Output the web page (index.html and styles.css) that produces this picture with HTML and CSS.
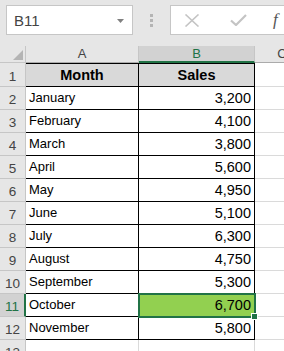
FILE: index.html
```html
<!DOCTYPE html>
<html lang="en">
  <head>
    <meta charset="UTF-8" />
    <meta name="viewport" content="width=device-width, initial-scale=1.0" />
    <title>Monthly Sales</title>
    <link rel="stylesheet" href="styles.css">
  </head>
  <body>
    <div class="toolbar">
      <div class="namebox">
        <span>B11</span>
        <svg class="drop" width="7" height="4" viewBox="0 0 7 4"><path d="M0 0h7L3.5 4z" fill="#808080"/></svg>
      </div>
      <div class="dots"><i></i><i></i><i></i></div>
      <div class="formula">
        <svg width="16" height="13" viewBox="0 0 16 13"><path d="M1.5 0.5l13 12M14.5 0.5l-13 12" stroke="#c4c4c4" stroke-width="1.6" fill="none"/></svg>
        <svg width="17" height="12" viewBox="0 0 17 12"><path d="M1 6.5l5 4.5L16 1" stroke="#c4c4c4" stroke-width="2.2" fill="none"/></svg>
        <span class="fx">f</span>
      </div>
    </div>

    <div class="sheet">
      <div class="corner"><span></span></div>
      <div class="colhead">A</div>
      <div class="colhead sel">B</div>
      <div class="colhead last">C</div>

      <div class="rowhead">1</div>
      <div class="cell th">Month</div>
      <div class="cell th">Sales</div>
      <div class="cell empty top"></div>

      <div class="rowhead">2</div>
      <div class="cell">January</div>
      <div class="cell num">3,200</div>
      <div class="cell empty"></div>

      <div class="rowhead">3</div>
      <div class="cell">February</div>
      <div class="cell num">4,100</div>
      <div class="cell empty"></div>

      <div class="rowhead">4</div>
      <div class="cell">March</div>
      <div class="cell num">3,800</div>
      <div class="cell empty"></div>

      <div class="rowhead">5</div>
      <div class="cell">April</div>
      <div class="cell num">5,600</div>
      <div class="cell empty"></div>

      <div class="rowhead">6</div>
      <div class="cell">May</div>
      <div class="cell num">4,950</div>
      <div class="cell empty"></div>

      <div class="rowhead">7</div>
      <div class="cell">June</div>
      <div class="cell num">5,100</div>
      <div class="cell empty"></div>

      <div class="rowhead">8</div>
      <div class="cell">July</div>
      <div class="cell num">6,300</div>
      <div class="cell empty"></div>

      <div class="rowhead">9</div>
      <div class="cell">August</div>
      <div class="cell num">4,750</div>
      <div class="cell empty"></div>

      <div class="rowhead">10</div>
      <div class="cell">September</div>
      <div class="cell num">5,300</div>
      <div class="cell empty"></div>

      <div class="rowhead sel">11</div>
      <div class="cell">October</div>
      <div class="cell num active">6,700</div>
      <div class="cell empty"></div>

      <div class="rowhead">12</div>
      <div class="cell">November</div>
      <div class="cell num">5,800</div>
      <div class="cell empty"></div>

      <div class="rowhead">13</div>
      <div class="cell blank"></div>
      <div class="cell blank"></div>
      <div class="cell empty"></div>
    </div>
  </body>
</html>
```

FILE: styles.css
```css
body {
  margin: 0;
  background: #ffffff;
  font-family: "Liberation Sans", Arial, sans-serif;
  overflow: hidden;
}
.toolbar {
  height: 46px;
  background: #e6e6e6;
  display: flex;
  align-items: flex-start;
  padding-top: 5px;
  box-sizing: border-box;
}
.namebox {
  margin-left: 6px;
  width: 127px;
  height: 30px;
  box-sizing: border-box;
  background: #fff;
  border: 1px solid #c6c6c6;
  display: flex;
  align-items: center;
  justify-content: space-between;
  padding: 0 8px 0 7px;
  font-size: 15px;
  color: #444;
}
.namebox .drop {
  margin-top: 1px;
}
.dots {
  width: 37px;
  height: 30px;
  display: flex;
  flex-direction: column;
  align-items: center;
  justify-content: center;
  gap: 2px;
}
.dots i {
  width: 3px;
  height: 3px;
  background: #b4b4b4;
}
.formula {
  flex: 1;
  height: 30px;
  box-sizing: border-box;
  background: #fff;
  border: 1px solid #c6c6c6;
  border-right: none;
  display: flex;
  align-items: center;
  padding-left: 13px;
  gap: 30px;
}
.formula .fx {
  font-family: "Liberation Serif", serif;
  font-style: italic;
  font-size: 17px;
  color: #555;
  margin-left: -4px;
}
.sheet {
  display: grid;
  grid-template-columns: 26px 113px 116px 54px;
  grid-template-rows: 17px 24px repeat(12, 23px);
}
.corner {
  background: #e6e6e6;
  border-right: 1px solid #c6c6c6;
  border-bottom: 1px solid #c6c6c6;
  position: relative;
}
.corner span {
  position: absolute;
  right: 2px;
  bottom: 2px;
  width: 0;
  height: 0;
  border-left: 10px solid transparent;
  border-bottom: 10px solid #b4b4b4;
}
.colhead {
  background: #e6e6e6;
  border-right: 1px solid #c6c6c6;
  border-bottom: 1px solid #ababab;
  font-size: 13px;
  color: #444;
  text-align: center;
  line-height: 16px;
}
.colhead.sel {
  background: #d2d2d2;
  border-bottom: 2px solid #217346;
  line-height: 15px;
  color: #217346;
}
.colhead.last {
  border-right: none;
}
.rowhead {
  background: #e6e6e6;
  border-right: 1px solid #c6c6c6;
  border-bottom: 1px solid #c6c6c6;
  font-size: 13.5px;
  color: #444;
  text-align: center;
  line-height: 22px;
  padding-top: 2px;
  box-sizing: border-box;
}
.rowhead.sel {
  background: #d2d2d2;
  border-right: 2px solid #217346;
  color: #217346;
}
.sheet > .rowhead:nth-child(5) {
  line-height: 23px;
}
.cell {
  border-right: 1px solid #000;
  border-bottom: 1px solid #000;
  font-size: 13px;
  color: #000;
  line-height: 22px;
  padding: 0 3px;
  box-sizing: border-box;
  white-space: nowrap;
}
.cell.th {
  background: #d9d9d9;
  border-top: 1px solid #000;
  font-weight: bold;
  font-size: 14.5px;
  text-align: center;
}
.cell.num {
  text-align: right;
  font-size: 14.5px;
}
.cell.empty {
  border-right: none;
  border-bottom: 1px solid #dadada;
}
.cell.blank {
  border-right: 1px solid #dadada;
  border-bottom: 1px solid #dadada;
}
.cell.active {
  background: #92d050;
  position: relative;
  outline: 2px solid #217346;
  outline-offset: -1px;
}
.cell.active::after {
  content: "";
  position: absolute;
  right: -4px;
  bottom: -4px;
  width: 5px;
  height: 5px;
  background: #217346;
  border: 1px solid #fff;
}
```
